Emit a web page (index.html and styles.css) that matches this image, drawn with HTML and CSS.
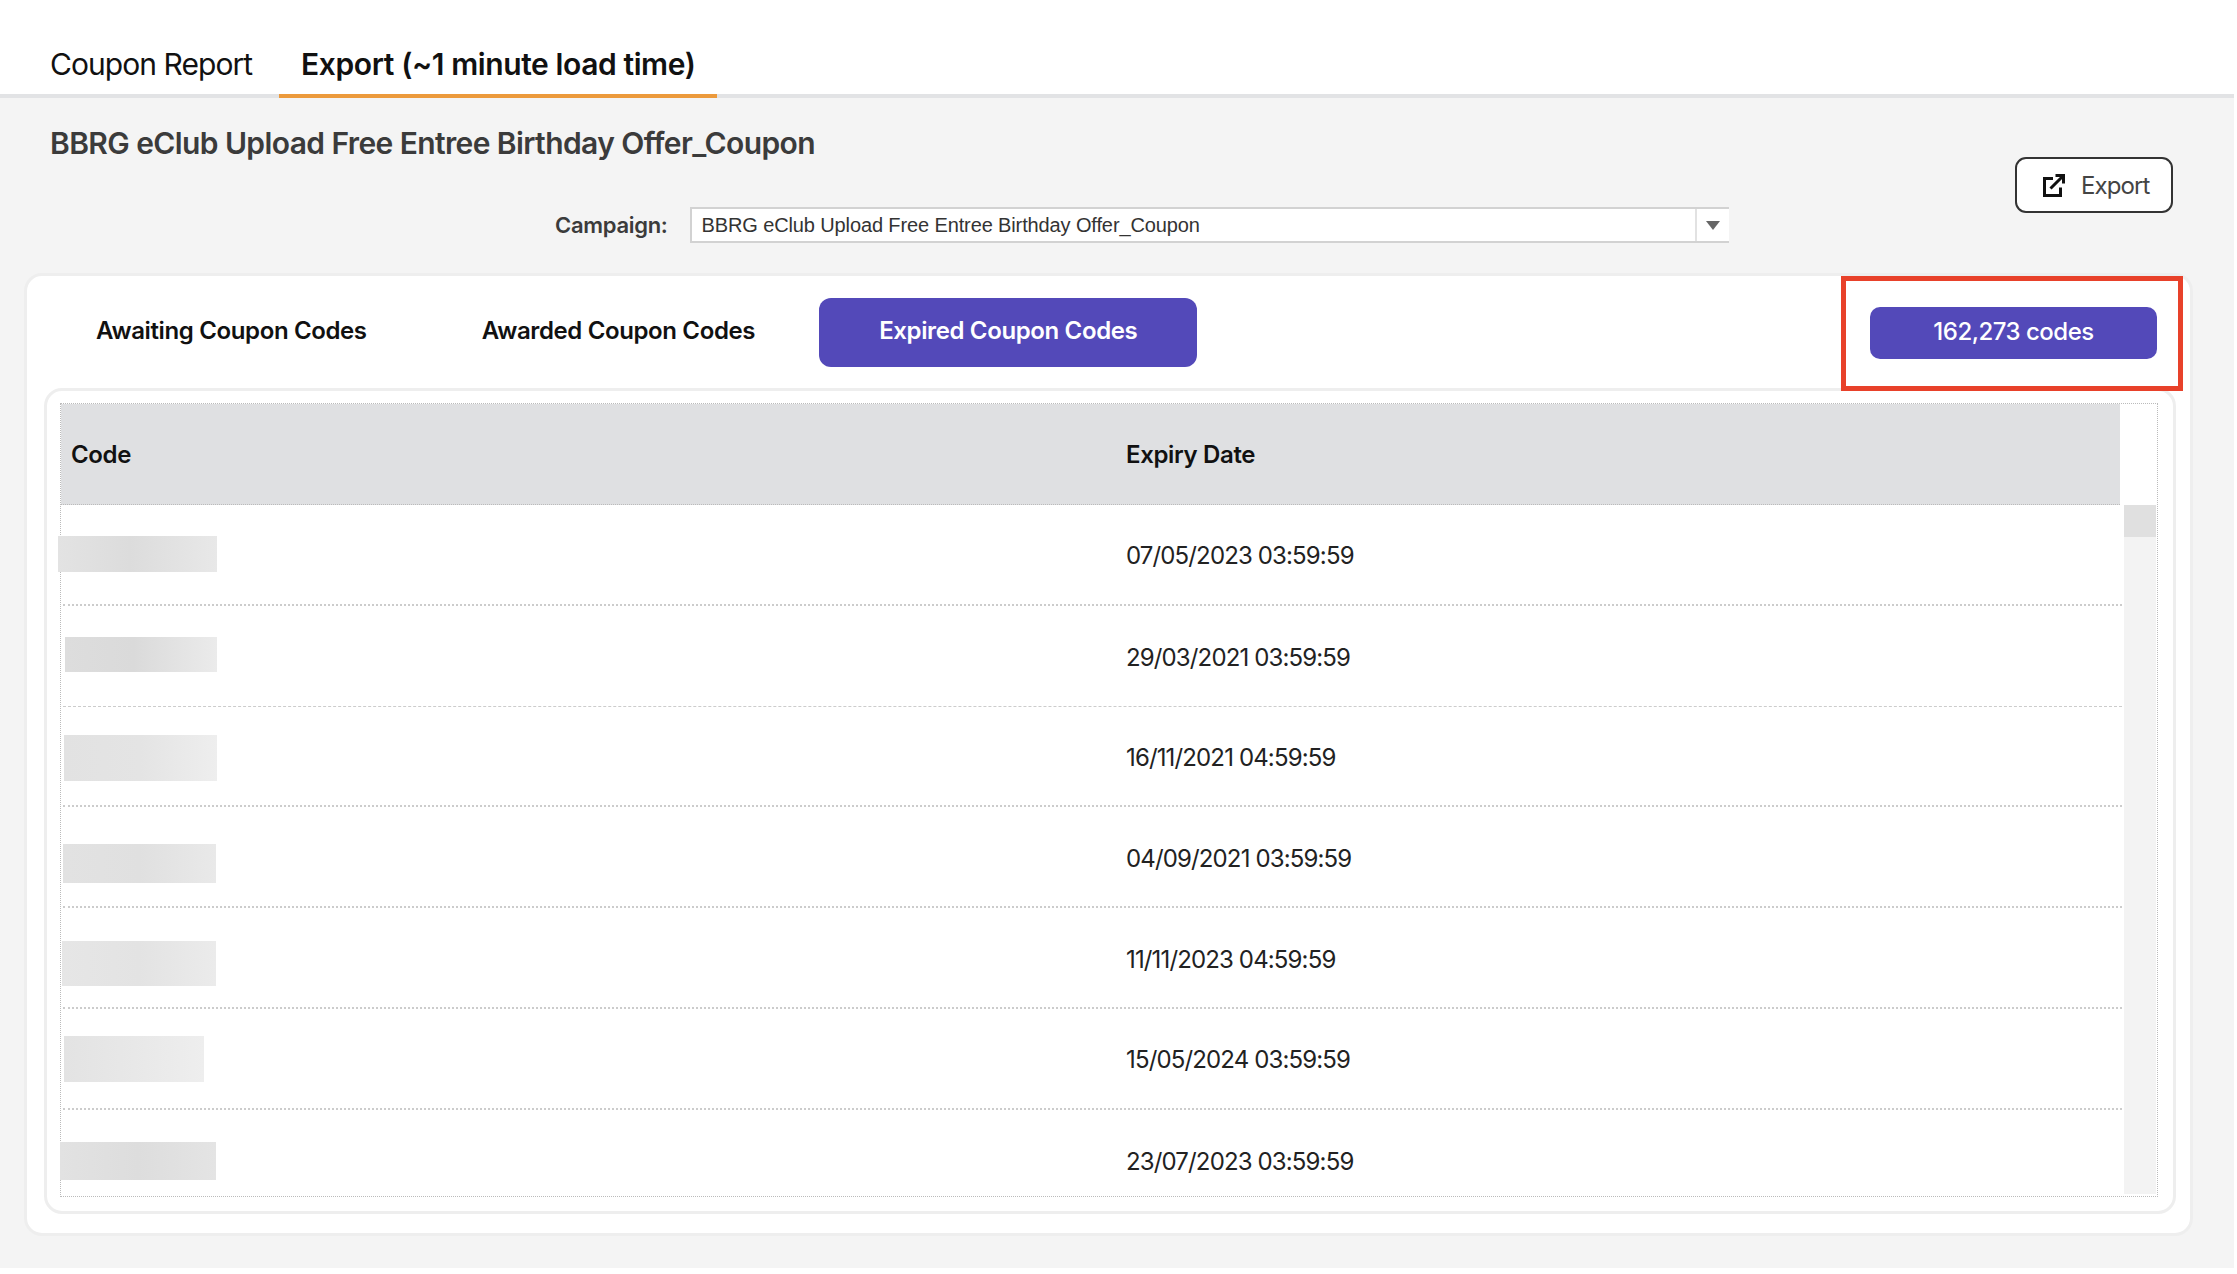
FILE: index.html
```html
<!DOCTYPE html>
<html lang="en">
<head>
  <meta charset="UTF-8" />
  <meta name="viewport" content="width=device-width, initial-scale=1.0"/>
  <title>Coupon Export</title>
  <link rel="stylesheet" href="styles.css">
</head>
<body>
  <div class="page">
    <div class="topbar">
      <a class="top-tab">Coupon Report</a>
      <a class="top-tab active">Export (~1 minute load time)</a>
    </div>

    <div class="head">
      <div class="head-left">
        <h1 class="title">BBRG eClub Upload Free Entree Birthday Offer_Coupon</h1>
        <div class="filter">
          <label class="filter-label">Campaign:</label>
          <div class="select">
            <span class="select-value">BBRG eClub Upload Free Entree Birthday Offer_Coupon</span>
            <span class="select-arrow"><i class="caret"></i></span>
          </div>
        </div>
      </div>
      <button class="export-btn">
        <svg class="export-icon" width="22" height="24" viewBox="0 0 22 24" fill="none" stroke="#111" stroke-width="3">
          <path d="M10 5.5H1.5v17h16v-8"/>
          <path d="M7.5 15.5L19 4"/>
          <path d="M12.5 2.5h8v8"/>
        </svg>
        Export
      </button>
    </div>

    <div class="card">
      <div class="card-tabs">
        <button class="code-tab">Awaiting Coupon Codes</button>
        <button class="code-tab">Awarded Coupon Codes</button>
        <button class="code-tab selected">Expired Coupon Codes</button>
        <div class="count">162,273 codes</div>
      </div>

      <div class="panel">
        <div class="grid">
          <div class="grid-head">
            <div class="cell-code">Code</div>
            <div>Expiry Date</div>
          </div>
          <div class="grid-body">
            <div class="rows">
              <div class="row"><div class="cell-code"><span class="blur blur-1"></span></div><div>07/05/2023 03:59:59</div></div>
              <div class="row"><div class="cell-code"><span class="blur blur-2"></span></div><div>29/03/2021 03:59:59</div></div>
              <div class="row"><div class="cell-code"><span class="blur blur-3"></span></div><div>16/11/2021 04:59:59</div></div>
              <div class="row"><div class="cell-code"><span class="blur blur-4"></span></div><div>04/09/2021 03:59:59</div></div>
              <div class="row"><div class="cell-code"><span class="blur blur-5"></span></div><div>11/11/2023 04:59:59</div></div>
              <div class="row"><div class="cell-code"><span class="blur blur-6"></span></div><div>15/05/2024 03:59:59</div></div>
              <div class="row"><div class="cell-code"><span class="blur blur-7"></span></div><div>23/07/2023 03:59:59</div></div>
            </div>
            <div class="scrollbar"><div class="thumb"></div></div>
          </div>
        </div>
      </div>

      <!-- Red annotation box -->
      <div class="highlight"></div>
    </div>
  </div>
</body>
</html>
```

FILE: styles.css
```css
* { box-sizing: border-box; }
html, body { margin: 0; background: #fff; }
body { font-family: Inter, "Open Sans", sans-serif; color: #111; }
.page { width: 2234px; height: 1268px; background: #f4f4f4; }

/* Top tabs */
.topbar { display: flex; gap: 5px; height: 98px; padding-left: 28px; background: #fff; border-bottom: 4px solid #e2e3e5; }
.top-tab { height: 98px; padding: 42px 22px 0; font-size: 30px; line-height: 44px; letter-spacing: -.95px; white-space: nowrap; }
.top-tab.active { font-weight: 600; border-bottom: 4px solid #ec9a3c; letter-spacing: -.4px; }

/* Title and filter */
.head { display: flex; justify-content: space-between; height: 175px; padding: 0 61px 0 50px; }
.head-left { flex: 1; }
.title { margin: 25px 0 0; font-size: 30px; line-height: 40px; font-weight: 600; color: #3b3b3b; letter-spacing: -.6px; white-space: nowrap; }
.filter { display: flex; align-items: center; gap: 22px; margin: 44px 0 0 505px; }
.filter-label { font-size: 22px; font-weight: 600; color: #3b3b3b; letter-spacing: -.3px; }
.select { display: flex; align-items: center; justify-content: space-between; width: 1039px; height: 36px; background: #fff; border: 2px solid #d2d2d2; border-right: 0; }
.select-value { padding-left: 10px; font-family: "Liberation Sans", Arial, sans-serif; font-size: 20px; letter-spacing: -.12px; color: #333; }
.select-arrow { display: flex; align-items: center; justify-content: center; width: 34px; height: 100%; border-left: 2px solid #e2e2e2; }
.caret { width: 0; height: 0; border-left: 7px solid transparent; border-right: 7px solid transparent; border-top: 9px solid #666; }
.export-btn { display: flex; align-items: center; gap: 16px; width: 158px; height: 56px; margin-top: 59px; padding: 0 0 0 26px; background: #fff; border: 2px solid #333; border-radius: 11px; font-family: inherit; font-size: 24px; color: #444; letter-spacing: -.9px; }

/* Main card */
.card { position: relative; width: 2169px; height: 963px; margin-left: 24px; background: #fff; border: 3px solid #eee; border-radius: 18px; }
.card-tabs { display: flex; align-items: center; gap: 1px; height: 69px; margin-top: 22px; padding: 0 33px 0 12px; }
.code-tab { height: 69px; padding: 0 57px 5px; background: none; border: 0; border-radius: 12px; font-family: inherit; font-size: 24px; font-weight: 600; color: #111; letter-spacing: -.37px; white-space: nowrap; }
.code-tab.selected { margin-left: 6px; padding: 0 60px 5px; background: #5349b9; color: #fff; }
.count { display: flex; align-items: center; justify-content: center; width: 287px; height: 52px; margin-left: auto; padding-bottom: 3px; background: #5349b9; border-radius: 10px; font-size: 24px; font-weight: 500; color: #fff; letter-spacing: -.5px; }
.highlight { position: absolute; left: 1814px; top: 0; width: 342px; height: 115px; border: 5px solid #e8412a; }

/* Inner panel and table */
.panel { height: 826px; margin: 21px 14px 0 17px; padding: 12px 15px 13px 13px; border: 3px solid #eee; border-radius: 18px; }
.grid { height: 794px; border: 1px dotted #bbb; }
.grid-head { display: grid; grid-template-columns: 1065px 1fr; align-items: center; width: 2059px; height: 101px; background: #dfe0e2; border-bottom: 1px dotted #bbb; font-size: 24px; font-weight: 600; letter-spacing: -.35px; }
.grid-head .cell-code { padding-left: 10px; }
.grid-body { display: flex; height: 691px; margin-left: -6px; padding-left: 6px; overflow: hidden; }
.rows { width: 2061px; padding-left: 2px; }
.row { display: grid; grid-template-columns: 1063px 1fr; align-items: center; height: 100.8px; padding-top: 3px; border-bottom: 2px dotted #ccc; font-size: 24px; letter-spacing: -.86px; color: #222; }
.row:nth-child(2) { border-bottom: 1px dashed #ccc; }
.row:last-child { border-bottom: 0; }
.cell-code { display: flex; align-items: center; }
.scrollbar { width: 32px; height: 689px; margin-left: 2px; background: #f3f3f3; }
.thumb { height: 32px; background: #e0e0e0; }

/* Blurred-out codes */
.blur { display: block; }
.blur-1 { width: 159px; height: 36px; margin: -3px 0 0 -5px; background: linear-gradient(90deg, #e3e3e3, #dcdcdc 45%, #e8e8e8); }
.blur-2 { width: 152px; height: 35px; margin: -5px 0 0 2px; background: linear-gradient(90deg, #ddd, #dadada 45%, #ebebeb); }
.blur-3 { width: 153px; height: 46px; margin: 2px 0 0 1px; background: linear-gradient(90deg, #e2e2e2, #e4e4e4 50%, #eee); }
.blur-4 { width: 153px; height: 39px; margin: 11px 0 0; background: linear-gradient(90deg, #e2e2e2, #e0e0e0 50%, #e9e9e9); }
.blur-5 { width: 154px; height: 45px; margin: 9px 0 0 -1px; background: linear-gradient(90deg, #e6e6e6, #e3e3e3 50%, #ebebeb); }
.blur-6 { width: 140px; height: 46px; margin: -2px 0 0 1px; background: linear-gradient(90deg, #e3e3e3, #e8e8e8 50%, #eee); }
.blur-7 { width: 156px; height: 38px; margin: -2px 0 0 -3px; background: linear-gradient(90deg, #e2e2e2, #ddd 50%, #e4e4e4); }
```
